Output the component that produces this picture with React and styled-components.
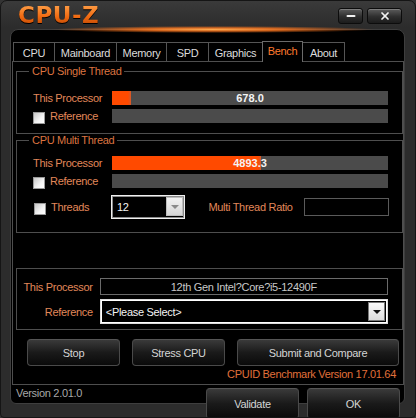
import React from 'react'
import styled, { createGlobalStyle } from 'styled-components'
import { Minus, X } from 'lucide-react'

const COLORS = {
  frame: '#2c2c2c',
  line: '#4e4e4e',
  legend: '#dc7440',
  label: '#e2885a',
  text: '#dcdcdc',
  orange: '#ff4a00',
  track: '#4b4b4b',
}

const TABS = [
  { name: 'CPU', width: 41 },
  { name: 'Mainboard', width: 62 },
  { name: 'Memory', width: 50 },
  { name: 'SPD', width: 42 },
  { name: 'Graphics', width: 54 },
  { name: 'Bench', width: 41 },
  { name: 'About', width: 43 },
]

const GlobalStyle = createGlobalStyle`
  html, body {
    margin: 0;
    background: #333;
  }
  body {
    font-family: "Liberation Sans", Arial, sans-serif;
    font-size: 11px;
    letter-spacing: -0.3px;
  }
  * {
    box-sizing: border-box;
  }
`

const Checkbox = () => <Check aria-hidden />

const ScoreBar = ({ share, value }) => (
  <Bar>
    {share > 0 && <Fill style={{ width: share * 100 + '%' }} />}
    {value && <BarValue>{value}</BarValue>}
  </Bar>
)

const Arrow = ({ tone }) => (
  <DropButton $tone={tone}>
    <Triangle $tone={tone} />
  </DropButton>
)

const App = () => (
  <>
    <GlobalStyle />
    <Window>
      <TitleBar>
        <Logo>CPU-Z</Logo>
        <TitleButtons>
          <TitleButton $w={25}>
            <Minus size={12} strokeWidth={4} />
          </TitleButton>
          <TitleButton $w={35}>
            <X size={12} strokeWidth={3.5} />
          </TitleButton>
        </TitleButtons>
      </TitleBar>

      <Panel>
        <Tabs>
          {TABS.map((tab) => (
            <Tab key={tab.name} $w={tab.width} $active={tab.name === 'Bench'}>
              {tab.name}
            </Tab>
          ))}
        </Tabs>

        <TabContent>
          <Group $mt={9} $pt={19} $pb={10}>
            <Legend>CPU Single Thread</Legend>
            <BarRow>
              <LabelCell>This Processor</LabelCell>
              <ScoreBar share={0.069} value="678.0" />
            </BarRow>
            <BarRow>
              <LabelCell>
                <Checkbox />
                Reference
              </LabelCell>
              <ScoreBar share={0} />
            </BarRow>
          </Group>

          <Group $mt={6} $pt={15} $pb={13}>
            <Legend>CPU Multi Thread</Legend>
            <BarRow>
              <LabelCell>This Processor</LabelCell>
              <ScoreBar share={0.54} value="4893.3" />
            </BarRow>
            <BarRow>
              <LabelCell>
                <Checkbox />
                Reference
              </LabelCell>
              <ScoreBar share={0} />
            </BarRow>
            <ThreadsRow>
              <LabelCell $shift>
                <Checkbox />
                Threads
              </LabelCell>
              <ThreadsCombo>
                <ComboText>12</ComboText>
                <Arrow tone="grey" />
              </ThreadsCombo>
              <RatioLabel>Multi Thread Ratio</RatioLabel>
              <RatioBox />
            </ThreadsRow>
          </Group>

          <Group $mt={35} $pt={9} $pb={5}>
            <InfoRow>
              <InfoLabel>This Processor</InfoLabel>
              <ProcessorField>12th Gen Intel?Core?i5-12490F</ProcessorField>
            </InfoRow>
            <InfoRow>
              <InfoLabel>Reference</InfoLabel>
              <ReferenceCombo>
                <ComboText>&lt;Please Select&gt;</ComboText>
                <Arrow tone="dark" />
              </ReferenceCombo>
            </InfoRow>
          </Group>

          <ButtonRow>
            <Button $w={93}>Stop</Button>
            <Button $w={93}>Stress CPU</Button>
            <Button $w={162}>Submit and Compare</Button>
          </ButtonRow>
          <BenchVersion>CPUID Benchmark Version 17.01.64</BenchVersion>
        </TabContent>

        <Footer>
          <Version>Version 2.01.0</Version>
          <FooterButtons>
            <Button $w={93} $h={31}>Validate</Button>
            <Button $w={93} $h={31}>OK</Button>
          </FooterButtons>
        </Footer>
      </Panel>
    </Window>
  </>
)

const Window = styled.div`
  width: 416px;
  height: 418px;
  padding: 0 10px 0 9px;
  overflow: hidden;
  background: linear-gradient(#3a3a3a, ${COLORS.frame} 26px, ${COLORS.frame});
  border: 1px solid #151515;
  border-radius: 7px 7px 4px 4px;
`

const TitleBar = styled.div`
  display: flex;
  align-items: flex-start;
  height: 28px;
`

const Logo = styled.div`
  margin: 3px 0 0 8px;
  font-family: "DejaVu Sans", sans-serif;
  font-weight: bold;
  font-size: 23px;
  line-height: 23px;
  letter-spacing: 0.5px;
  background: linear-gradient(#ffa24a, #f06a12 55%, #b84300);
  -webkit-background-clip: text;
  background-clip: text;
  color: transparent;
  filter: drop-shadow(0 1px 0 #000);
`

const TitleButtons = styled.div`
  display: flex;
  gap: 4px;
  margin: 7px 3px 0 auto;
`

const TitleButton = styled.div`
  display: flex;
  align-items: center;
  justify-content: center;
  width: ${(p) => p.$w}px;
  height: 16px;
  color: #f2f2f2;
  background: linear-gradient(#5c5c5c, #2e2e2e 55%, #1c1c1c);
  border: 1px solid #0c0c0c;
  border-radius: 3px;
  box-shadow: inset 0 1px 0 rgba(255, 255, 255, 0.22);
`

const Panel = styled.div`
  position: relative;
  height: 375px;
  padding: 11px 0 0 1px;
  background: #000;
  border: 1px solid #3e3e3e;
  border-radius: 8px 8px 6px 6px;

  &::before {
    content: '';
    position: absolute;
    left: 40px;
    right: 30px;
    top: -4px;
    height: 7px;
    background: radial-gradient(
      closest-side,
      rgba(255, 170, 80, 1) 0%,
      rgba(245, 115, 30, 0.85) 45%,
      rgba(200, 70, 0, 0) 100%
    );
  }
`

const Tabs = styled.div`
  display: flex;
  align-items: flex-end;
  height: 20px;
  padding-left: 1px;
`

const Tab = styled.div`
  position: relative;
  display: flex;
  justify-content: center;
  width: ${(p) => p.$w}px;
  height: ${(p) => (p.$active ? 21 : 19)}px;
  margin-bottom: ${(p) => (p.$active ? -1 : 0)}px;
  margin-right: ${(p) => (p.$active ? -1 : 0)}px;
  padding-top: ${(p) => (p.$active ? 3 : 4)}px;
  color: ${(p) => (p.$active ? '#ff7a2e' : COLORS.text)};
  background: #000;
  border: 1px solid ${(p) => (p.$active ? '#6a6a6a' : '#555')};
  border-bottom: none;
  border-right-width: ${(p) => (p.$active ? 1 : 0)}px;
  z-index: ${(p) => (p.$active ? 1 : 0)};

  &:last-child {
    border-right-width: 1px;
  }
`

const TabContent = styled.div`
  display: flex;
  flex-direction: column;
  height: 324px;
  border: 1px solid ${COLORS.line};
`

const Group = styled.div`
  position: relative;
  display: flex;
  flex-direction: column;
  gap: 4px;
  margin: ${(p) => p.$mt}px 0 0 3px;
  padding: ${(p) => p.$pt}px 14px ${(p) => p.$pb}px 16px;
  border: 1px solid ${COLORS.line};
`

const Legend = styled.span`
  position: absolute;
  top: -7px;
  left: 12px;
  padding: 0 3px;
  line-height: 13px;
  color: ${COLORS.legend};
  background: #000;
`

const BarRow = styled.div`
  display: flex;
  align-items: center;
  height: 14px;
`

const LabelCell = styled.div`
  display: flex;
  align-items: center;
  flex: none;
  width: 79px;
  padding-left: ${(p) => (p.$shift ? 1 : 0)}px;
  color: ${COLORS.label};
  white-space: nowrap;
`

const Check = styled.span`
  flex: none;
  width: 12px;
  height: 12px;
  margin: 3px 5px 0 0;
  background: linear-gradient(135deg, #c8c8c8, #f4f4f4 60%, #fff);
  border: 1px solid #9a9a9a;
`

const Bar = styled.div`
  position: relative;
  display: flex;
  flex: 1;
  height: 14px;
  background: ${COLORS.track};
`

const Fill = styled.div`
  height: 100%;
  background: linear-gradient(90deg, ${COLORS.orange}, ${COLORS.orange} calc(100% - 3px), #d25a2c);
`

const BarValue = styled.span`
  position: absolute;
  inset: 0;
  display: flex;
  align-items: center;
  justify-content: center;
  font-weight: bold;
  letter-spacing: 0;
  color: #f4f4f4;
`

const ThreadsRow = styled.div`
  display: flex;
  align-items: center;
  height: 24px;
  margin-top: 3px;
`

const ThreadsCombo = styled.div`
  display: flex;
  width: 75px;
  height: 24px;
  margin-left: -1px;
  padding: 1px 1px 2px 0;
  background: #000;
  border: 1px solid #f0f0f0;
  box-shadow: inset 0 0 0 1px #8a8a8a;
`

const ComboText = styled.span`
  flex: 1;
  display: flex;
  align-items: center;
  padding-left: 5px;
  color: #f4f4f4;
`

const DropButton = styled.span`
  display: flex;
  align-items: center;
  justify-content: center;
  width: 17px;
  background: ${(p) =>
    p.$tone === 'grey'
      ? 'linear-gradient(#f2f2f2, #d6d6d6)'
      : 'linear-gradient(#fafafa, #dcdcdc)'};
  border: 1px solid ${(p) => (p.$tone === 'grey' ? '#bdbdbd' : '#7a7a7a')};
`

const Triangle = styled.span`
  width: 0;
  height: 0;
  border-left: 4px solid transparent;
  border-right: 4px solid transparent;
  border-top: 4px solid ${(p) => (p.$tone === 'grey' ? '#8a8a8a' : '#111')};
`

const RatioLabel = styled.span`
  width: 96px;
  margin-left: 23px;
  color: ${COLORS.label};
  white-space: nowrap;
`

const RatioBox = styled.div`
  width: 86px;
  height: 18px;
  margin-right: -1px;
  border: 1px solid #5a5a5a;
`

const InfoRow = styled.div`
  display: flex;
  align-items: center;
  margin-left: -16px;
`

const InfoLabel = styled.span`
  width: 76px;
  margin-right: 7px;
  text-align: right;
  color: ${COLORS.label};
  white-space: nowrap;
`

const ProcessorField = styled.div`
  display: flex;
  align-items: center;
  justify-content: center;
  width: 290px;
  height: 17px;
  color: #c8c8c8;
  border: 1px solid #6a6a6a;
`

const ReferenceCombo = styled.div`
  display: flex;
  width: 289px;
  height: 25px;
  padding: 2px 2px 2px 0;
  background: #000;
  border: 1px solid #dcdcdc;
  box-shadow: inset 0 0 0 1px #fff;
`

const ButtonRow = styled.div`
  display: flex;
  gap: 12px;
  margin-top: 9px;
  padding-left: 14px;
`

const Button = styled.div`
  display: flex;
  align-items: center;
  justify-content: center;
  flex: none;
  width: ${(p) => p.$w}px;
  height: ${(p) => p.$h || 27}px;
  color: #d4d4d4;
  background: linear-gradient(#3a3a3a, #1a1a1a 50%, #0a0a0a);
  border: 1px solid #4a4a4a;
  border-top-color: #555;
  border-radius: 4px;
`

const BenchVersion = styled.div`
  margin-top: 2px;
  padding-right: 7px;
  text-align: right;
  line-height: 13px;
  color: #e0703a;
`

const Footer = styled.div`
  display: flex;
  align-items: flex-start;
  padding: 2px 4px 0 4px;
`

const Version = styled.span`
  line-height: 13px;
  color: #a8a8a8;
`

const FooterButtons = styled.div`
  display: flex;
  gap: 8px;
  margin: 1px 0 0 auto;
`

export default App
